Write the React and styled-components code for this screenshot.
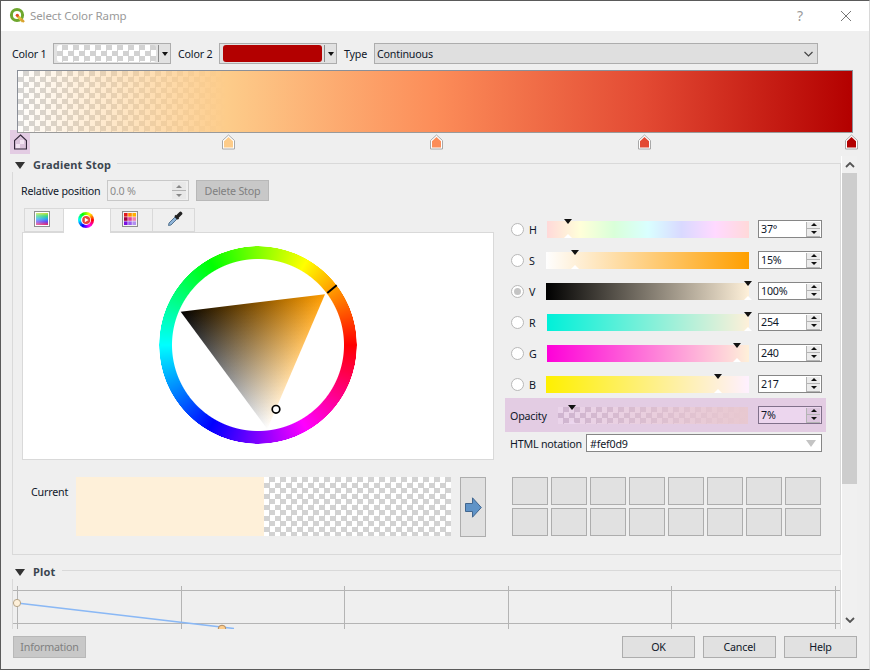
import React from "react";
import styled, { createGlobalStyle, css } from "styled-components";

const checker = (a, b, size = 11) => css`
  background-image: repeating-conic-gradient(${a} 0 25%, ${b} 0 50%);
  background-size: ${size}px ${size}px;
`;

const Global = createGlobalStyle`
  html, body { margin: 0; padding: 0; background: #efefef; }
  body { width: 870px; height: 670px; overflow: hidden; }
  * { box-sizing: border-box; }
`;

const Win = styled.div`
  width: 870px;
  height: 670px;
  display: flex;
  flex-direction: column;
  border: 1px solid #5a5a5a;
  border-right-color: #d8d8d8;
  background: #efefef;
  font-family: "Noto Sans", "Open Sans", sans-serif;
  font-size: 10.7px;
  letter-spacing: -0.2px;
  color: #10182a;
`;

const TitleBar = styled.div`
  height: 30px;
  flex: none;
  background: #fff;
  display: flex;
  align-items: center;
  padding: 0 0 1px 8px;
`;
const TitleText = styled.div`
  margin-left: 4px;
  padding-bottom: 1px;
  font-size: 11.5px;
  letter-spacing: -0.1px;
  color: #9a9a9a;
  flex: 1;
`;
const HelpMark = styled.div`
  width: 20px;
  font-size: 14px;
  color: #9a9a9a;
  text-align: center;
  margin-right: 31px;
`;
const CloseMark = styled.svg`
  width: 10px;
  height: 10px;
  margin-right: 18px;
`;

const Body = styled.div`
  flex: 1;
  display: flex;
  flex-direction: column;
  padding-right: 12px;
  min-height: 0;
`;

const TopRow = styled.div`
  flex: none;
  height: 21px;
  margin-top: 12px;
  padding-left: 11px;
  display: flex;
  align-items: center;
`;
const TopLabel = styled.div`
  width: ${(p) => p.$w}px;
  flex: none;
`;
const ColorButton = styled.div`
  width: 118px;
  height: 21px;
  flex: none;
  margin-right: 7px;
  background: #e1e1e1;
  border: 1px solid #adadad;
  display: flex;
  align-items: center;
  padding-left: 3px;
`;
const ColorFill = styled.div`
  width: 99px;
  height: 17px;
  border-radius: 3px;
  ${(p) => (p.$color ? css`background: ${p.$color};` : checker("#d2d2d2", "#ffffff"))}
`;
const ColorSep = styled.div`
  width: 1px;
  height: 17px;
  margin-left: 2px;
  background: #8c8c8c;
`;
const BlackArrow = styled.div`
  margin-left: 3px;
  width: 0;
  height: 0;
  border-left: 3.5px solid transparent;
  border-right: 3.5px solid transparent;
  border-top: 4px solid #111;
`;
const Combo = styled.div`
  width: 444px;
  height: 21px;
  background: #dfdfdf;
  border: 1px solid #adadad;
  display: flex;
  align-items: center;
  justify-content: space-between;
  padding: 0 4px 0 2px;
`;

const RampWrap = styled.div`
  position: relative;
  flex: none;
  width: 836px;
  height: 85px;
  margin: 6px 0 0 16px;
`;
const Ramp = styled.div`
  position: relative;
  z-index: 1;
  height: 63px;
  border: 1px solid #8a8f98;
  border-bottom-color: #9a9a9a;
  background-color: #fff;
  background-image:
    linear-gradient(to right, rgba(254, 240, 217, 0.07) 0%, #fdcc8a 25%, #fc8d59 50%, #e34a33 75%, #b30000 100%),
    repeating-conic-gradient(#d2d2d2 0 25%, #ffffff 0 50%);
  background-size: 100% 100%, 11px 11px;
`;
const StopHighlight = styled.div`
  position: absolute;
  left: -7px;
  top: 60px;
  width: 20px;
  height: 24px;
  background: #e3cce3;
`;
const StopMark = styled.svg`
  position: absolute;
  z-index: 2;
  left: ${(p) => p.$x - 23.5}px;
  top: 64px;
  width: 13px;
  height: 16px;
`;

const ScrollRow = styled.div`
  flex: none;
  height: 474px;
  display: flex;
`;
const Content = styled.div`
  width: 840px;
  height: 474px;
  overflow: hidden;
  padding: 2px 0 0 11px;
`;
const Scrollbar = styled.div`
  width: 16px;
  margin-top: 1px;
  border-left: 1px solid #fff;
  background: #f0f0f0;
  display: flex;
  flex-direction: column;
  align-items: center;
`;
const ScrollEnd = styled.svg`
  width: 10px;
  height: 6px;
  flex: none;
  margin: ${(p) => p.$m};
`;
const Thumb = styled.div`
  width: 15px;
  height: 311px;
  flex: none;
  background: #cdcdcd;
`;
const ScrollGap = styled.div`
  flex: 1;
`;

const SectionHead = styled.div`
  height: 15px;
  display: flex;
  align-items: flex-start;
  position: relative;
`;
const Caret = styled.div`
  width: 0;
  height: 0;
  margin: 5px 0 0 3px;
  border-left: 5.5px solid transparent;
  border-right: 5.5px solid transparent;
  border-top: 7px solid #333;
  flex: none;
`;
const SectionTitle = styled.div`
  margin: 0 6px 0 8px;
  line-height: 16px;
  font-weight: 700;
  font-size: 11px;
  letter-spacing: 0.2px;
  color: #3c4650;
`;
const HeadLine = styled.div`
  flex: 1;
  height: 15px;
  margin-top: 6px;
  border-top: 1px solid #d9d9d9;
  border-right: 1px solid #d9d9d9;
`;
const SectionBody = styled.div`
  height: 383px;
  padding-top: 8px;
  border: 1px solid #d9d9d9;
  border-top: none;
`;
const PlotBody = styled.div`
  border-left: 1px solid #d9d9d9;
  border-right: 1px solid #d9d9d9;
  height: 51px;
`;
const PlotSpacer = styled.div`
  height: 9px;
`;

const RelRow = styled.div`
  display: flex;
  align-items: center;
  height: 21px;
  margin-left: 8px;
`;
const RelLabel = styled.div`
  width: 86px;
`;
const RelSpin = styled.div`
  width: 82px;
  height: 21px;
  border: 1px solid #c8c8c8;
  display: flex;
  align-items: center;
  justify-content: space-between;
  padding: 0 2px;
  color: #8c8c8c;
`;
const Button = styled.div`
  width: ${(p) => p.$w || 73}px;
  height: 22px;
  flex: none;
  display: flex;
  align-items: center;
  justify-content: center;
  border: 1px solid ${(p) => (p.$off ? "#b8b8b8" : "#adadad")};
  background: ${(p) => (p.$off ? "#c8c8c8" : "#e1e1e1")};
  color: ${(p) => (p.$off ? "#808080" : "#10182a")};
`;
const DeleteBtn = styled(Button)`
  margin-left: 7px;
  height: 21px;
`;

const MainGrid = styled.div`
  display: grid;
  grid-template-columns: 472px 321px;
  column-gap: 11px;
  row-gap: 17px;
  margin: 7px 0 0 9px;
`;
const TabBar = styled.div`
  height: 24px;
  display: flex;
  align-items: flex-end;
  padding-left: 3px;
  position: relative;
  z-index: 1;
`;
const Tab = styled.div`
  width: ${(p) => p.$w}px;
  height: ${(p) => (p.$active ? 25 : 24)}px;
  margin-bottom: ${(p) => (p.$active ? -1 : 0)}px;
  margin-left: -1px;
  border: 1px solid #d9d9d9;
  border-bottom: ${(p) => (p.$active ? "none" : "1px solid #d9d9d9")};
  background: ${(p) => (p.$active ? "#fff" : "#efefef")};
  display: flex;
  justify-content: flex-start;
  padding: ${(p) => (p.$active ? 3 : 2)}px 0 0 ${(p) => p.$pad}px;
`;
const TabIcon = styled.svg`
  width: 16px;
  height: 16px;
`;
const TabRing = styled.div`
  width: 16px;
  height: 16px;
  border-radius: 50%;
  background: conic-gradient(from 90deg, #f00, #f0f, #00f, #0ff, #0f0, #ff0, #f00);
`;
const Panel = styled.div`
  height: 228px;
  background: #fff;
  border: 1px solid #d9d9d9;
  display: flex;
  align-items: center;
  justify-content: center;
  padding-bottom: 2px;
`;
const Wheel = styled.div`
  position: relative;
  width: 198px;
  height: 198px;
`;
const Ring = styled.div`
  position: absolute;
  inset: 0;
  border-radius: 50%;
  background: conic-gradient(from 90deg, #f00, #f0f, #00f, #0ff, #0f0, #ff0, #f00);
  -webkit-mask: radial-gradient(circle closest-side, transparent 85.5px, #000 86.5px, #000 98.5px, transparent 99px);
  mask: radial-gradient(circle closest-side, transparent 85.5px, #000 86.5px, #000 98.5px, transparent 99px);
`;
const WheelArt = styled.svg`
  position: absolute;
  inset: 0;
  width: 198px;
  height: 198px;
`;
const AddRect = styled.rect`
  mix-blend-mode: plus-lighter;
`;

const RightCol = styled.div`
  padding-top: 12px;
`;
const Channels = styled.div`
  display: flex;
  flex-direction: column;
  gap: 13px;
`;
const ChannelRow = styled.div`
  height: 18px;
  display: flex;
  align-items: flex-start;
  padding-left: 6px;
`;
const Radio = styled.div`
  width: 13px;
  height: 13px;
  margin-top: 3px;
  flex: none;
  border-radius: 50%;
  border: 1px solid #b8b8b8;
  background: #fff;
  display: flex;
  align-items: center;
  justify-content: center;
`;
const RadioDot = styled.div`
  width: 7px;
  height: 7px;
  border-radius: 50%;
  background: #c4c4c4;
`;
const ChannelName = styled.div`
  width: ${(p) => (p.$wide ? 17 : 18)}px;
  margin-left: 5px;
  line-height: 21px;
  flex: none;
`;
const Slider = styled.div`
  position: relative;
  width: ${(p) => (p.$wide ? 203 : 202)}px;
  height: 17px;
  margin-top: 1px;
  flex: none;
  background: ${(p) => p.$bg};
`;
const SliderTop = styled.div`
  position: absolute;
  left: ${(p) => p.$pos - 4.5}px;
  top: -2px;
  width: 0;
  height: 0;
  border-left: 4.5px solid transparent;
  border-right: 4.5px solid transparent;
  border-top: 5px solid #111;
`;
const SliderBottom = styled.div`
  position: absolute;
  left: ${(p) => p.$pos - 4.5}px;
  bottom: 0;
  width: 0;
  height: 0;
  border-left: 4.5px solid transparent;
  border-right: 4.5px solid transparent;
  border-bottom: 4px solid ${(p) => p.$color || "#fff"};
`;
const Spin = styled.div`
  width: 64px;
  height: 18px;
  margin-left: 9px;
  flex: none;
  border: 1px solid ${(p) => (p.$tint ? "#80708a" : "#868686")};
  background: ${(p) => (p.$tint ? "#ecd6ee" : "#fff")};
  display: flex;
  align-items: center;
  justify-content: space-between;
  padding-left: 2px;
`;
const SpinBtns = styled.div`
  width: 14px;
  height: 15px;
  margin-right: 1px;
  display: flex;
  flex-direction: column;
  background: ${(p) => (p.$tint ? "#dcc6de" : "#ececec")};
  border-left: 1px solid #b4b4b4;
  border-bottom: 1px solid #b4b4b4;
`;
const SpinUp = styled.div`
  flex: 1;
  display: flex;
  align-items: center;
  justify-content: center;
  border-bottom: 1px solid #b4b4b4;
  &::after {
    content: "";
    border-left: 3.5px solid transparent;
    border-right: 3.5px solid transparent;
    border-bottom: 3.5px solid ${(p) => p.$c || "#111"};
  }
`;
const SpinDown = styled.div`
  flex: 1;
  display: flex;
  align-items: center;
  justify-content: center;
  &::after {
    content: "";
    border-left: 3.5px solid transparent;
    border-right: 3.5px solid transparent;
    border-top: 3.5px solid ${(p) => p.$c || "#111"};
  }
`;
const RelBtns = styled.div`
  width: 14px;
  height: 17px;
  display: flex;
  flex-direction: column;
  background: #e8e8e8;
`;
const OpacityRow = styled.div`
  height: 34px;
  margin-top: 5px;
  padding-left: 5px;
  background: #e3cce3;
  display: flex;
  align-items: center;
`;
const OpacityName = styled.div`
  width: 48px;
  padding-top: 2px;
  flex: none;
`;
const OpacitySlider = styled.div`
  position: relative;
  width: 190px;
  height: 17px;
  margin-right: 1px;
  flex: none;
  background-image:
    linear-gradient(to right, rgba(232, 200, 208, 0), rgba(232, 200, 208, 1)),
    repeating-conic-gradient(#cfb5d0 0 25%, #ead4ea 0 50%);
  background-size: 100% 100%, 11px 11px;
`;
const HtmlRow = styled.div`
  height: 18px;
  margin-top: 2px;
  padding-left: 5px;
  display: flex;
  align-items: center;
`;
const HtmlName = styled.div`
  width: 76px;
  padding-top: 2px;
  flex: none;
`;
const HtmlInput = styled.div`
  width: 236px;
  height: 18px;
  background: #fff;
  border: 1px solid #868686;
  display: flex;
  align-items: center;
  justify-content: space-between;
  padding: 1px 5px 0 3px;
`;
const GrayTri = styled.div`
  border-left: 5.5px solid transparent;
  border-right: 5.5px solid transparent;
  border-top: 7px solid #c4c4c4;
`;

const CurrentRow = styled.div`
  display: flex;
  align-items: flex-start;
  padding-left: 9px;
`;
const CurrentName = styled.div`
  width: 45px;
  padding-top: 7px;
  line-height: 16px;
  flex: none;
`;
const CurrentNow = styled.div`
  width: 188px;
  height: 59px;
  background: #fef0d9;
`;
const CurrentAlpha = styled.div`
  width: 187px;
  height: 59px;
  ${checker("#d2d2d2", "#ffffff")}
`;
const ArrowBtn = styled.div`
  width: 26px;
  height: 60px;
  margin-left: 9px;
  background: #e1e1e1;
  border: 1px solid #adadad;
  display: flex;
  align-items: center;
  justify-content: center;
`;
const SwatchGrid = styled.div`
  margin-left: 7px;
  display: grid;
  grid-template-columns: repeat(8, 36px);
  grid-auto-rows: 28px;
  gap: 3px;
`;
const Swatch = styled.div`
  background: #e1e1e1;
  border: 1px solid #adadad;
`;
const PlotArt = styled.svg`
  display: block;
  width: 827px;
  height: 51px;
`;
const Footer = styled.div`
  flex: none;
  margin: 7px 0 0 12px;
  display: flex;
  gap: 8px;
`;
const Grow = styled.div`
  flex: 1;
`;

const HUE = [166, 48.3];
const BLK = [21.7, 65.7];
const WHT = [108.3, 183];
const foot = (p, a, b) => {
  const dx = b[0] - a[0];
  const dy = b[1] - a[1];
  const t = ((p[0] - a[0]) * dx + (p[1] - a[1]) * dy) / (dx * dx + dy * dy);
  return [a[0] + t * dx, a[1] + t * dy];
};
const hueFoot = foot(HUE, BLK, WHT);
const whtFoot = foot(WHT, BLK, HUE);
const triPts = [HUE, BLK, WHT].map((p) => p.join(",")).join(" ");

const channels = [
  { n: "H", v: "37°", pos: 21, bg: "linear-gradient(to right,#ffd9d9,#ffffd9 16.6%,#d9ffd9 33.3%,#d9ffff 50%,#d9d9ff 66.6%,#ffd9ff 83.3%,#ffd9d9)" },
  { n: "S", v: "15%", pos: 29, wide: true, bg: "linear-gradient(to right,#fefefe,#fe9f00)" },
  { n: "V", v: "100%", pos: 202, wide: true, on: true, bg: "linear-gradient(to right,#000,#fef0d9)" },
  { n: "R", v: "254", pos: 201, bg: "linear-gradient(to right,#00f0d9,#fef0d9)" },
  { n: "G", v: "240", pos: 190, bg: "linear-gradient(to right,#fe00d9,#fef0d9)" },
  { n: "B", v: "217", pos: 172, wide: true, bg: "linear-gradient(to right,#fef000,#fef0ff)" },
];
const stops = [
  { x: 228, c: "#fdcc8a" },
  { x: 436, c: "#fc8d59" },
  { x: 644, c: "#e34a33" },
  { x: 851, c: "#b30000" },
];
const palette = ["#e31a1c", "#ff8c00", "#ffb000", "#a00040", "#e0409a", "#f080b0", "#7a10e0", "#9a60f0", "#b090f0"];

function SpinArrows({ tint }) {
  return (
    <SpinBtns $tint={tint}>
      <SpinUp />
      <SpinDown />
    </SpinBtns>
  );
}

function Logo() {
  return (
    <svg width="17" height="17" viewBox="0 0 17 17">
      <circle cx="8" cy="8" r="5.6" fill="none" stroke="#6ea72e" strokeWidth="3" />
      <path d="M8.5 9 L14 14.5" stroke="#e0c040" strokeWidth="3" />
      <path d="M12 12 L15 15" stroke="#d8a030" strokeWidth="2.4" />
      <circle cx="8.3" cy="8.3" r="1.6" fill="#e04a20" />
    </svg>
  );
}

export default function App() {
  return (
    <>
      <Global />
      <Win>
        <TitleBar>
          <Logo />
          <TitleText>Select Color Ramp</TitleText>
          <HelpMark>?</HelpMark>
          <CloseMark viewBox="0 0 10 10">
            <path d="M0 0L10 10M10 0L0 10" stroke="#777" strokeWidth="1" />
          </CloseMark>
        </TitleBar>
        <Body>
          <TopRow>
            <TopLabel $w={41}>Color 1</TopLabel>
            <ColorButton>
              <ColorFill />
              <ColorSep />
              <BlackArrow />
            </ColorButton>
            <TopLabel $w={41}>Color 2</TopLabel>
            <ColorButton>
              <ColorFill $color="#b30000" />
              <ColorSep />
              <BlackArrow />
            </ColorButton>
            <TopLabel $w={30}>Type</TopLabel>
            <Combo>
              <span>Continuous</span>
              <svg width="9" height="6" viewBox="0 0 9 6">
                <path d="M.5 1L4.5 5L8.5 1" fill="none" stroke="#444" strokeWidth="1.2" />
              </svg>
            </Combo>
          </TopRow>

          <RampWrap>
            <StopHighlight />
            <Ramp />
            <StopMark $x={20.5} viewBox="0 0 13 16">
              <path d="M6.5 1L12.5 6.5V15H.5V6.5Z" fill="#dcc4dc" stroke="#33283a" strokeWidth="1.2" />
              <rect x="2" y="10" width="4" height="4" fill="#f2e4f2" />
              <rect x="6" y="6" width="4" height="4" fill="#f2e4f2" />
            </StopMark>
            {stops.map((s) => (
              <StopMark key={s.x} $x={s.x} viewBox="0 0 13 16">
                <path d="M6.5 1L12.5 6.5V15H.5V6.5Z" fill="#fff" stroke="#a8a8a8" />
                <path d="M6.5 3L11 7.2V13.5H2V7.2Z" fill={s.c} />
              </StopMark>
            ))}
          </RampWrap>

          <ScrollRow>
            <Content>
              <SectionHead>
                <Caret />
                <SectionTitle>Gradient Stop</SectionTitle>
                <HeadLine />
              </SectionHead>
              <SectionBody>
                <RelRow>
                  <RelLabel>Relative position</RelLabel>
                  <RelSpin>
                    <span>0.0 %</span>
                    <RelBtns>
                      <SpinUp $c="#888" />
                      <SpinDown $c="#888" />
                    </RelBtns>
                  </RelSpin>
                  <DeleteBtn $off>Delete Stop</DeleteBtn>
                </RelRow>
                <MainGrid>
                  <div>
                    <TabBar>
                      <Tab $w={40} $pad={9}>
                        <TabIcon viewBox="0 0 16 16">
                          <defs>
                            <linearGradient id="rainbow" x1="0" y1="0" x2="0" y2="1">
                              <stop offset="0" stopColor="#c8e030" />
                              <stop offset=".25" stopColor="#30d880" />
                              <stop offset=".5" stopColor="#20a0f0" />
                              <stop offset=".72" stopColor="#6040f0" />
                              <stop offset="1" stopColor="#f02060" />
                            </linearGradient>
                            <linearGradient id="fade" x1="0" y1="0" x2="1" y2="0">
                              <stop offset="0" stopColor="#fff" stopOpacity=".35" />
                              <stop offset="1" stopColor="#fff" stopOpacity="0" />
                            </linearGradient>
                          </defs>
                          <rect x=".5" y=".5" width="15" height="15" fill="#fff" stroke="#8e8e8e" />
                          <rect x="2" y="2" width="12" height="12" fill="url(#rainbow)" />
                          <rect x="2" y="2" width="12" height="12" fill="url(#fade)" />
                        </TabIcon>
                      </Tab>
                      <Tab $w={48} $pad={14} $active>
                        <TabIcon viewBox="0 0 16 16">
                          <foreignObject x="0" y="0" width="16" height="16">
                            <TabRing />
                          </foreignObject>
                          <circle cx="8" cy="8" r="5" fill="#fff" />
                          <circle cx="8.2" cy="8" r="4" fill="#e8443a" />
                          <path d="M6.8 5.8L10.6 8L6.8 10.2Z" fill="#fff" />
                        </TabIcon>
                      </Tab>
                      <Tab $w={43} $pad={11}>
                        <TabIcon viewBox="0 0 16 16">
                          <rect x=".5" y=".5" width="15" height="15" fill="#f4f4f4" stroke="#8e8e8e" />
                          {palette.map((c, i) => (
                            <rect key={c} x={2 + (i % 3) * 4.2} y={2 + Math.floor(i / 3) * 4.2} width="3.6" height="3.6" fill={c} />
                          ))}
                        </TabIcon>
                      </Tab>
                      <Tab $w={43} $pad={14}>
                        <TabIcon viewBox="0 0 16 16">
                          <path d="M1.5 14.5L2 12L8.5 5.5L10.5 7.5L4 14Z" fill="#8fb4d8" stroke="#4a6a88" strokeWidth=".9" />
                          <path d="M8 4.5L11.5 8" stroke="#222" strokeWidth="2" />
                          <path d="M10 6L13.5 2.5" stroke="#222" strokeWidth="3.6" strokeLinecap="round" />
                        </TabIcon>
                      </Tab>
                    </TabBar>
                    <Panel>
                      <Wheel>
                        <Ring />
                        <WheelArt viewBox="0 0 198 198">
                          <defs>
                            <clipPath id="triClip">
                              <polygon points={triPts} />
                            </clipPath>
                            <linearGradient id="hueFade" gradientUnits="userSpaceOnUse" x1={HUE[0]} y1={HUE[1]} x2={hueFoot[0]} y2={hueFoot[1]}>
                              <stop offset="0" stopColor="rgb(255,157,0)" />
                              <stop offset="1" stopColor="#000" />
                            </linearGradient>
                            <linearGradient id="whiteFade" gradientUnits="userSpaceOnUse" x1={WHT[0]} y1={WHT[1]} x2={whtFoot[0]} y2={whtFoot[1]}>
                              <stop offset="0" stopColor="#fff" />
                              <stop offset="1" stopColor="#000" />
                            </linearGradient>
                          </defs>
                          <g clipPath="url(#triClip)" style={{ isolation: "isolate" }}>
                            <rect width="198" height="198" fill="#000" />
                            <AddRect width="198" height="198" fill="url(#hueFade)" />
                            <AddRect width="198" height="198" fill="url(#whiteFade)" />
                          </g>
                          <path d="M168.3 47L177.7 39.3" stroke="#000" strokeWidth="2" />
                          <circle cx="117" cy="163.3" r="3.8" fill="#fff" stroke="#000" strokeWidth="1.7" />
                        </WheelArt>
                      </Wheel>
                    </Panel>
                  </div>
                  <RightCol>
                    <Channels>
                      {channels.map((c) => (
                        <ChannelRow key={c.n}>
                          <Radio>{c.on && <RadioDot />}</Radio>
                          <ChannelName $wide={c.wide}>{c.n}</ChannelName>
                          <Slider $bg={c.bg} $wide={c.wide}>
                            <SliderTop $pos={c.pos} />
                            <SliderBottom $pos={c.pos} />
                          </Slider>
                          <Spin>
                            <span>{c.v}</span>
                            <SpinArrows />
                          </Spin>
                        </ChannelRow>
                      ))}
                    </Channels>
                    <OpacityRow>
                      <OpacityName>Opacity</OpacityName>
                      <OpacitySlider>
                        <SliderTop $pos={14} />
                        <SliderBottom $pos={14} $color="#ecd6ee" />
                      </OpacitySlider>
                      <Spin $tint>
                        <span>7%</span>
                        <SpinArrows tint />
                      </Spin>
                    </OpacityRow>
                    <HtmlRow>
                      <HtmlName>HTML notation</HtmlName>
                      <HtmlInput>
                        <span>#fef0d9</span>
                        <GrayTri />
                      </HtmlInput>
                    </HtmlRow>
                  </RightCol>
                  <CurrentRow>
                    <CurrentName>Current</CurrentName>
                    <CurrentNow />
                    <CurrentAlpha />
                    <ArrowBtn>
                      <svg width="17" height="21" viewBox="0 0 17 21">
                        <path d="M.5 6.5H7.5V.8L16.3 10.5L7.5 20.2V14.5H.5Z" fill="#5f93c7" stroke="#41668f" />
                      </svg>
                    </ArrowBtn>
                  </CurrentRow>
                  <SwatchGrid>
                    {Array.from({ length: 16 }, (_, i) => (
                      <Swatch key={i} />
                    ))}
                  </SwatchGrid>
                </MainGrid>
              </SectionBody>
              <PlotSpacer />
              <SectionHead>
                <Caret />
                <SectionTitle>Plot</SectionTitle>
                <HeadLine />
              </SectionHead>
              <PlotBody>
                <PlotArt viewBox="0 0 827 51">
                  {[4, 168, 331, 495, 658, 822].map((x) => (
                    <path key={x} d={`M${x}.5 7V51`} stroke="#b4b4b4" />
                  ))}
                  <path d="M0 11.5H827M0 44.5H827" stroke="#b4b4b4" />
                  <path d="M4 24L221 49.5" stroke="#8ab8f5" strokeWidth="1.6" />
                  <circle cx="4" cy="24" r="3.6" fill="#fef0d9" stroke="#b5a488" />
                  <circle cx="209" cy="50" r="3.8" fill="#fdcc8a" stroke="#b08a60" />
                </PlotArt>
              </PlotBody>
            </Content>
            <Scrollbar>
              <ScrollEnd $m="6px 0 5px" viewBox="0 0 10 6">
                <path d="M1 5L5 1L9 5" fill="none" stroke="#555" strokeWidth="1.8" />
              </ScrollEnd>
              <Thumb />
              <ScrollGap />
              <ScrollEnd $m="0 0 6px" viewBox="0 0 10 6">
                <path d="M1 1L5 5L9 1" fill="none" stroke="#555" strokeWidth="1.8" />
              </ScrollEnd>
            </Scrollbar>
          </ScrollRow>

          <Footer>
            <Button $off>Information</Button>
            <Grow />
            <Button>OK</Button>
            <Button>Cancel</Button>
            <Button>Help</Button>
          </Footer>
        </Body>
      </Win>
    </>
  );
}
